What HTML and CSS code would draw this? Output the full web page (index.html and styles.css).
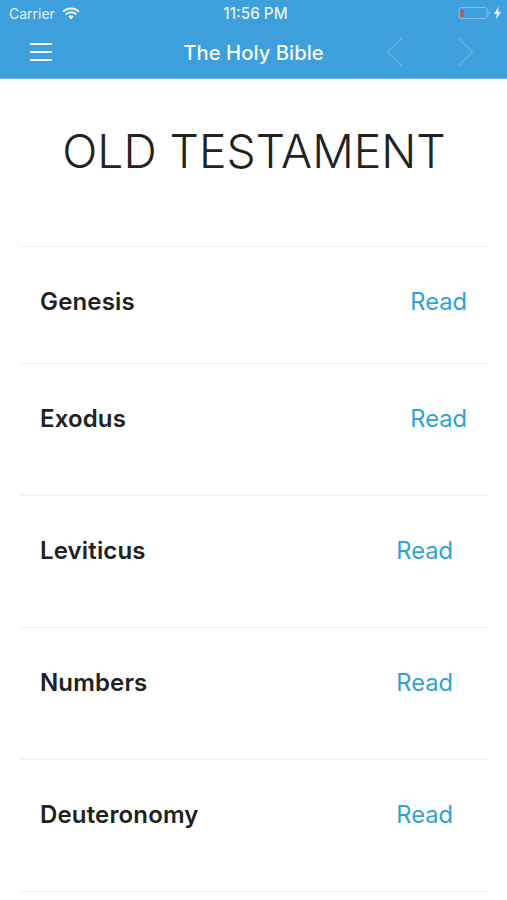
FILE: index.html
```html
<!DOCTYPE html>
<html lang="en">
<head>
<meta charset="utf-8">
<title>The Holy Bible</title>
<link rel="stylesheet" href="styles.css">
</head>
<body>
<header class="topbar">
  <div class="status">
    <div class="status-left">
      <span>Carrier</span>
      <svg class="wifi" width="18" height="13" viewBox="0 0 18 13"><path d="M9 12.6 6.3 9.6a3.9 3.9 0 0 1 5.4 0Z" fill="#e6f2fb"/><path d="M1 4.6a11.6 11.6 0 0 1 16 0M3.6 7.4a7.9 7.9 0 0 1 10.8 0" fill="none" stroke="#e6f2fb" stroke-width="2"/></svg>
    </div>
    <div class="status-time">11:56 PM</div>
    <div class="status-right">
      <svg width="32" height="14" viewBox="0 0 32 14"><rect x="1" y="1.5" width="28" height="11" rx="2.5" fill="none" stroke="#8fbfe3" stroke-width="1"/><rect x="2.5" y="3" width="3" height="8" rx="1" fill="#c9504f"/><rect x="30.5" y="5.5" width="1.5" height="3" fill="#8fbfe3"/></svg>
      <svg width="9" height="14" viewBox="0 0 9 14"><path d="M6 .5 .8 8h3L2.8 13.5 8.2 5.8H5Z" fill="#e6f2fb"/></svg>
    </div>
  </div>
  <nav class="navbar">
    <svg class="menu" width="24" height="18" viewBox="0 0 24 18"><path d="M1 1h22M1 9h22M1 17h22" stroke="#f2f8fd" stroke-width="2"/></svg>
    <div class="nav-title">The Holy Bible</div>
    <div class="nav-arrows">
      <svg width="17" height="30" viewBox="0 0 17 30"><path d="M16 1 1.5 15 16 29" fill="none" stroke="#6aaee0" stroke-width="1.5"/></svg>
      <svg width="17" height="30" viewBox="0 0 17 30"><path d="M1 1l14.5 14L1 29" fill="none" stroke="#6aaee0" stroke-width="1.5"/></svg>
    </div>
  </nav>
</header>
<main class="content">
  <h1 class="heading">OLD TESTAMENT</h1>
  <ul class="books">
    <li class="book book-first"><span class="name">Genesis</span><a class="read">Read</a></li>
    <li class="book book-wide"><span class="name">Exodus</span><a class="read">Read</a></li>
    <li class="book"><span class="name">Leviticus</span><a class="read">Read</a></li>
    <li class="book"><span class="name">Numbers</span><a class="read">Read</a></li>
    <li class="book"><span class="name">Deuteronomy</span><a class="read">Read</a></li>
  </ul>
</main>
</body>
</html>
```

FILE: styles.css
```css
* { box-sizing: border-box; }
html, body { margin: 0; padding: 0; }
body {
  width: 507px;
  height: 900px;
  overflow: hidden;
  background: #fff;
  font-family: Inter, "Liberation Sans", sans-serif;
  color: #212121;
}
.topbar {
  height: 79px;
  background: #3d9fdc;
  color: #fff;
  border-bottom: 1px solid #6fb9e8;
}
.status {
  height: 26px;
  padding: 0 5px 0 9px;
  display: grid;
  grid-template-columns: 1fr auto 1fr;
  align-items: center;
  font-size: 14px;
  color: #e6f2fb;
}
.status-left, .status-right { display: flex; align-items: center; }
.status-left { gap: 7px; }
.status-right { justify-content: flex-end; gap: 3px; }
.status-time { font-weight: 500; font-size: 15.3px; }
.navbar {
  height: 52px;
  padding: 0 33px 0 29px;
  display: grid;
  grid-template-columns: 1fr auto 1fr;
  align-items: center;
}
.menu { width: 24px; }
.nav-title { font-size: 20.3px; font-weight: 500; color: #f5fafd; padding-left: 4px; }
.nav-arrows { display: flex; justify-content: flex-end; gap: 54px; }
.content { padding: 0 19px 0 20px; }
.heading {
  margin: 0;
  height: 168px;
  padding-top: 41px;
  text-align: center;
  font-size: 46.2px;
  line-height: 62px;
  font-weight: 300;
  color: #222;
  border-bottom: 1px solid #f1f1f1;
}
.books { list-style: none; margin: 0; padding: 0; }
.book {
  height: 132px;
  padding: 38px 35px 0 20px;
  display: flex;
  justify-content: space-between;
  align-items: flex-start;
  border-bottom: 1px solid #f1f1f1;
  font-size: 24px;
  line-height: 34px;
}
.book-first { height: 117px; }
.book-first, .book-wide { padding-right: 21px; }
.name { font-weight: 600; letter-spacing: 0.15px; color: #212121; }
.read { color: #2fa3cf; font-size: 23.7px; }
```
